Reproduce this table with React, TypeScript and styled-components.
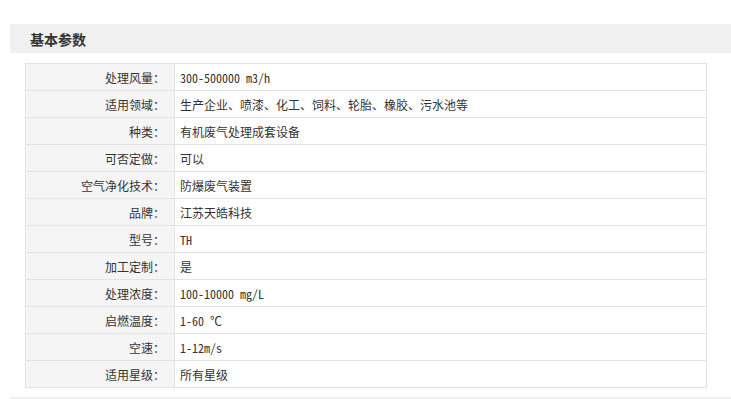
import React from 'react';
import styled, { createGlobalStyle } from 'styled-components';

const GlobalStyle = createGlobalStyle`
  html, body {
    margin: 0;
    padding: 0;
    background: #fff;
  }
  body {
    font-family: "Noto Sans Mono CJK SC", "Noto Sans CJK SC", monospace;
    font-size: 12px;
    color: #333;
  }
`;

const params = [
  { label: '处理风量', value: '300-500000 m3/h' },
  { label: '适用领域', value: '生产企业、喷漆、化工、饲料、轮胎、橡胶、污水池等' },
  { label: '种类', value: '有机废气处理成套设备' },
  { label: '可否定做', value: '可以' },
  { label: '空气净化技术', value: '防爆废气装置' },
  { label: '品牌', value: '江苏天皓科技' },
  { label: '型号', value: 'TH' },
  { label: '加工定制', value: '是' },
  { label: '处理浓度', value: '100-10000 mg/L' },
  { label: '启燃温度', value: '1-60 ℃' },
  { label: '空速', value: '1-12m/s' },
  { label: '适用星级', value: '所有星级' },
];

const Section = styled.section`
  padding: 24px 0 0 10px;
`;

const TitleBar = styled.div`
  height: 29px;
  background: #f0f0f0;
  display: flex;
  align-items: center;
  padding-left: 20px;
`;

const Title = styled.h3`
  margin: 0;
  font-family: "Noto Sans CJK SC", sans-serif;
  font-size: 14px;
  font-weight: 700;
  color: #333;
`;

const Body = styled.div`
  padding: 10px 24px 9px 15px;
  border-bottom: 2px solid #f0f0f0;
`;

const Table = styled.table`
  width: 100%;
  border-collapse: collapse;
  border: 1px solid #e3e3e3;
`;

const Row = styled.tr`
  height: 27px;
`;

const Label = styled.td`
  width: 139px;
  padding: 0 9px 0 0;
  background: #f5f5f5;
  border: 1px solid #e3e3e3;
  text-align: right;
  white-space: nowrap;
`;

const Value = styled.td`
  padding: 0 0 0 5px;
  border: 1px solid #e3e3e3;
  white-space: nowrap;
`;

export default function App() {
  return (
    <>
      <GlobalStyle />
      <Section>
        <TitleBar>
          <Title>基本参数</Title>
        </TitleBar>
        <Body>
          <Table>
            <tbody>
              {params.map((p) => (
                <Row key={p.label}>
                  <Label>{p.label}：</Label>
                  <Value>{p.value}</Value>
                </Row>
              ))}
            </tbody>
          </Table>
        </Body>
      </Section>
    </>
  );
}
